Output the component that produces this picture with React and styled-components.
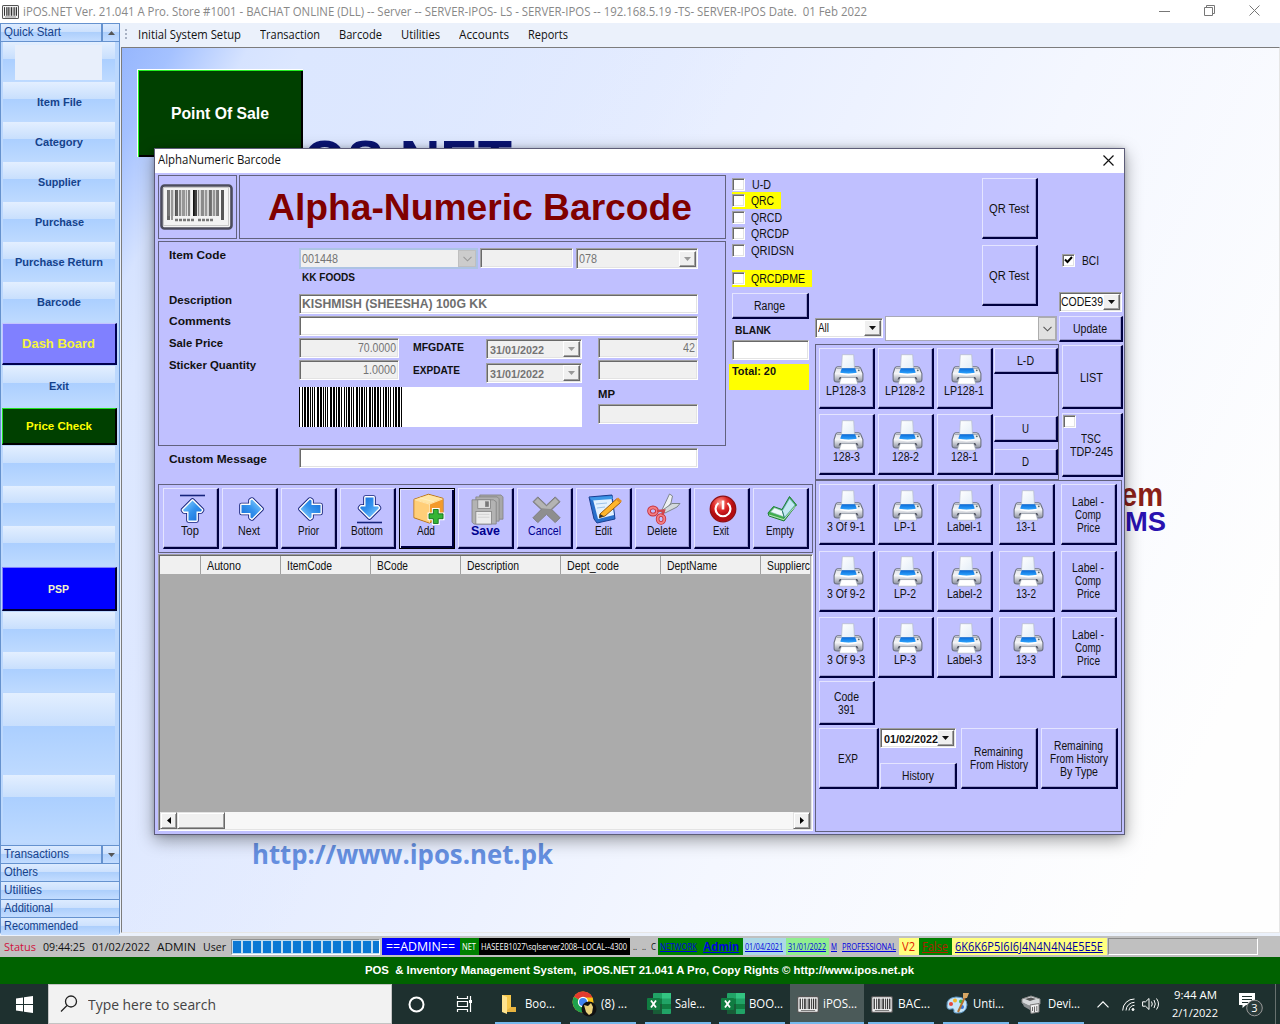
import React, { useLayoutEffect, useRef, useState } from 'react';
import styled, { createGlobalStyle, css } from 'styled-components';

const sans = '"Liberation Sans", Arial, sans-serif';
const ui = '"Open Sans", "Noto Sans", sans-serif';

const Global = createGlobalStyle`
  *{box-sizing:border-box}
  body{margin:0;background:#fff;overflow:hidden;font-family:${sans}}
  svg{display:block;flex:none}
`;

const TextBox = styled.span`
  display:block;flex:none;width:${p => p.$w}px;white-space:nowrap;
  font-family:${p => (p.$ui ? ui : sans)};
  font-size:${p => p.$s || 12}px;font-weight:${p => p.$b || 400};
  line-height:${p => p.$lh || 14}px;height:${p => p.$lh || 14}px;
  color:${p => p.$c || 'inherit'};
  margin:${p => p.$m || '0'};
`;
const Glyphs = styled.span`display:inline-block;transform-origin:0 50%;text-decoration:${p => (p.$u ? 'underline' : 'none')};`;
function T({ w, s, b, lh, c, m, u, seg, children }) {
  const ref = useRef(null);
  const [k, setK] = useState(1);
  useLayoutEffect(() => {
    if (ref.current && ref.current.offsetWidth) {
      const r = ref.current.getBoundingClientRect().width / k;
      setK(w / r);
    }
  }, [w, children]);
  return (
    <TextBox $w={w} $s={s} $b={b} $lh={lh} $c={c} $m={m} $ui={seg}>
      <Glyphs ref={ref} $u={u} style={{ transform: `scaleX(${k})` }}>{children}</Glyphs>
    </TextBox>
  );
}

const Screen = styled.div`width:1280px;height:1024px;display:flex;flex-direction:column;overflow:hidden;background:#fff;position:relative;`;

/* ---------- title bar ---------- */
const TitleBar = styled.header`height:23px;display:flex;align-items:center;background:#fff;padding-left:2px;flex:none;`;
const WinControls = styled.div`margin-left:auto;display:flex;align-items:center;gap:34px;padding:0 20px 2px 0;height:22px;`;

const BarcodeGlyph = ({ w = 17, h = 14 }) => (
  <svg width={w} height={h} viewBox="0 0 34 26" preserveAspectRatio="none">
    <rect x="1" y="1" width="32" height="24" rx="2" fill="#f4f4f4" stroke="#555" strokeWidth="2" />
    {[[4, 2], [8, 1.5], [11, 2.5], [15, 1], [17.5, 2.5], [21.5, 1.5], [24.5, 2], [28, 2]].map(([x, bw]) => (
      <rect key={x} x={x} y="4" width={bw} height="16" fill="#333" />
    ))}
    <rect x="6" y="21.5" width="22" height="1.5" fill="#777" />
  </svg>
);

/* ---------- body frame ---------- */
const Frame = styled.div`height:913px;display:flex;flex:none;background:#ebf1fb;`;
const Side = styled.aside`width:120px;height:911px;display:flex;flex-direction:column;border:1px solid #6592cf;border-top:0;background:#bcd8fd;flex:none;border-radius:0 0 2px 2px;`;
const Bar = styled.div`
  height:18px;flex:none;display:flex;align-items:center;padding:0 0 2px 3px;
  border-top:1px solid #6592cf;
  background:linear-gradient(#dcebff 0,#cde1fd 45%,#adcffc 50%,#c3dcff 100%);
`;
const BarArrow = styled.div`margin:0 0 -2px auto;width:17px;height:17px;border-left:1px solid #6592cf;display:flex;align-items:center;justify-content:center;box-shadow:-1px 0 #6592cf;`;
const SideStack = styled.div`height:804px;flex:none;display:flex;flex-direction:column;border-top:1px solid #6592cf;padding:0 4px 0 2px;`;
const GlassItem = styled.div`
  height:${p => p.$h || 40}px;flex:none;display:flex;align-items:center;justify-content:center;color:#15428b;
  background:linear-gradient(#e3efff 0,#c8dffd ${p => p.$split || 17}px,#abcfff ${p => p.$split || 17}px,#bedaff 100%);
  margin-top:${p => p.$mt || 0}px;
`;
const LogoBlank = styled.div`width:87px;height:35px;background:#e8effb;margin-right:1px;`;
const BigItem = styled.div`
  height:${p => p.$h}px;margin:${p => p.$mt || 0}px -2px 0 -1px;flex:none;display:flex;align-items:center;justify-content:center;
  background:${p => p.$bg};border:1px solid ${p => p.$lt};border-right:2px solid ${p => p.$dk};border-bottom:2px solid ${p => p.$dk};
`;

const Work = styled.div`width:1160px;display:flex;flex-direction:column;`;
const Menu = styled.nav`height:24px;display:flex;align-items:center;padding-left:5px;gap:19px;color:#111;`;
const Grip = styled.div`width:2px;height:12px;margin-right:-8px;background:repeating-linear-gradient(#a9b2c4 0 2px,transparent 2px 4px);`;
const Desk = styled.main`
  height:886px;margin-left:1px;border-left:1px solid #7c7c7c;border-top:1px solid #7c7c7c;border-right:1px solid #e6e6e6;border-bottom:1px solid #e6e6e6;
  position:relative;overflow:hidden;padding:20px 0 0 15px;
  background:linear-gradient(118deg,#96b6fd 0,#a4c1ff 45px,#d6e3ff 112px,#dce7ff 160px,rgba(222,232,255,0) 560px),
    linear-gradient(115deg,#dbe6ff 0,#e6edff 35%,#f4f7ff 62%,#fefefe 90%);
`;
const PosButton = styled.button`
  width:166px;height:88px;padding:0;display:flex;align-items:center;justify-content:center;background:#004000;
  border:1px solid #fff;border-width:1px 0 0 1px;box-shadow:inset 1px 1px #22ee22,inset -2px -2px #000;font:inherit;
`;
const Wall = styled.div`position:absolute;left:${p => p.$x}px;top:${p => p.$y}px;`;

/* ---------- dialog ---------- */
const Dialog = styled.section`
  position:absolute;left:154px;top:148px;width:971px;height:687px;border:1px solid #5d5d78;background:#c0c0ff;
  box-shadow:0 5px 16px rgba(0,0,0,.38),0 0 5px rgba(0,0,0,.2);
`;
const DialogTitle = styled.div`height:24px;background:#fff;display:flex;align-items:center;justify-content:space-between;padding:0 10px 2px 3px;`;
const DialogBody = styled.div`display:flex;height:661px;color:#111;`;
const LeftCol = styled.div`width:660px;display:flex;flex-direction:column;padding-left:3px;flex:none;`;
const RightCol = styled.div`width:309px;display:flex;flex-direction:column;flex:none;`;
const UpperRow = styled.div`height:311px;display:flex;flex:none;`;
const FormCol = styled.div`width:571px;padding-top:2px;flex:none;`;
const Outline = css`border:1px solid #62627e;`;
const HeadRow = styled.div`display:flex;gap:2px;height:64px;`;
const LogoCell = styled.div`${Outline}width:79px;display:flex;align-items:center;justify-content:center;padding-right:2px;`;
const HeadCell = styled.div`${Outline}width:487px;display:flex;align-items:center;padding:2px 0 0 28px;`;
const FormGroup = styled.div`${Outline}width:568px;height:205px;margin-top:2px;display:flex;padding-left:10px;`;
const LabelCol = styled.div`width:130px;flex:none;padding-top:6px;`;
const FieldCol = styled.div`flex:1;padding-top:6px;`;
const CodeRow = styled.div`display:flex;`;
const sunken = css`border:1px solid;border-color:#a0a0a0 #fff #fff #a0a0a0;box-shadow:inset 1px 1px #696969,inset -1px -1px #e3e3e3;`;
const Field = styled.div`
  ${sunken}width:${p => p.$w}px;height:${p => p.$h || 20}px;background:${p => (p.$on ? '#fff' : '#f0f0f0')};flex:none;
  display:flex;align-items:center;justify-content:${p => (p.$right ? 'flex-end' : 'flex-start')};padding:0 2px;
  color:#747474;margin-top:${p => p.$mt || 0}px;overflow:hidden;
`;
const SpacedField = styled(Field)`margin:0 3px 0 2px;`;
const Combo = styled(Field)`padding:0 1px 0 2px;justify-content:space-between;color:${p => (p.$on ? '#111' : '#747474')};`;
const DropBtn = styled.div`
  width:17px;height:16px;background:#f0f0f0;border:1px solid;border-color:#fff #696969 #696969 #fff;box-shadow:inset -1px -1px #a0a0a0;
  display:flex;align-items:center;justify-content:center;flex:none;margin-left:-3px;
`;
const FlatCombo = styled.div`
  width:${p => p.$w}px;height:${p => p.$h}px;border:${p => (p.$blue ? '2px solid #adc3e4' : '1px solid #a9a9b8')};background:${p => (p.$blue ? '#f0f0f0' : '#fff')};
  display:flex;align-items:center;justify-content:space-between;color:#747474;padding-left:1px;flex:none;
`;
const FlatDrop = styled.div`width:18px;height:100%;background:${p => (p.$live ? '#e1e1e1' : '#ccc')};border:1px solid ${p => (p.$live ? '#adadad' : '#bfbfbf')};display:flex;align-items:center;justify-content:center;`;
const Lower = styled.div`display:flex;margin-top:2px;`;
const LowerLeft = styled.div`width:299px;`;
const LowerGrid = styled.div`display:flex;height:49px;`;
const NumCol = styled.div`width:114px;display:flex;flex-direction:column;gap:2px;`;
const MiniCol = styled.div`width:73px;padding-top:2px;`;
const DateCol = styled.div`display:flex;flex-direction:column;gap:3px;padding-top:1px;`;
const PriceCol = styled.div`width:100px;`;
const CodeStrip = styled.div`width:283px;height:40px;background:#fff;`;
const MessageRow = styled.div`display:flex;align-items:center;padding-left:11px;margin-top:2px;`;

const ChecksCol = styled.div`width:84px;padding:5px 0 0 3px;flex:none;`;
const CheckRow = styled.div`display:flex;align-items:center;height:17px;width:${p => p.$w || 70}px;margin-top:${p => p.$mt || 0}px;background:${p => (p.$hot ? '#ffff00' : 'transparent')};padding-bottom:${p => (p.$hot ? 1 : 0)}px;`;
const Check = styled.div`${sunken}width:13px;height:13px;background:#fff;flex:none;display:flex;align-items:center;justify-content:center;`;
const Total = styled.div`width:80px;height:26px;background:#ff0;margin:4px 0 0 -3px;padding-left:3px;`;

const Btn = styled.button`
  font:inherit;color:#111;padding:${p => (p.$h && p.$h < 40 ? 0 : 2)}px 1px 0 0;flex:none;background:#c0c0ff;
  width:${p => p.$w || 56}px;height:${p => p.$h || 61}px;margin:${p => p.$m || '0'};
  border-style:solid;border-width:1px 2px 2px 1px;border-color:#e4e4ff #000040 #000040 #e4e4ff;
  box-shadow:inset -1px -1px #9a9ad2;
  display:flex;flex-direction:column;align-items:center;justify-content:${p => (p.$icon ? 'flex-start' : 'center')};
  ${p => p.$icon && css`padding-top:5px;`}
  ${p => p.$focus && css`border:1px solid #000;box-shadow:inset 1px 1px #e4e4ff,inset -2px -2px #000040;padding:5px 2px 0 0;`}
`;
const IconSlot = styled.div`height:30px;display:flex;align-items:center;justify-content:center;padding-left:4px;`;

const Toolbar = styled.div`${Outline}width:655px;height:69px;display:flex;gap:3px;padding:3px 0 0 4px;flex:none;`;
const Table = styled.div`${sunken}width:655px;height:277px;margin-top:1px;padding:1px 2px 1px 1px;background:#ababab;display:flex;flex-direction:column;overflow:hidden;flex:none;`;
const THead = styled.div`display:flex;height:18px;background:#f0f0f0;flex:none;overflow:hidden;`;
const Th = styled.div`width:${p => p.$w}px;flex:none;display:flex;align-items:center;padding:2px 0 0 6px;border-right:${p => (p.$last ? 0 : 1)}px solid #a0a0a0;`;
const TBody = styled.div`flex:1;background:#ababab;`;
const Scroll = styled.div`height:17px;display:flex;flex:none;background:#f7f7f7;`;
const ScrollBtn = styled.div`width:${p => p.$w}px;height:17px;margin-left:${p => (p.$end ? 'auto' : 0)};background:#f0f0f0;border:1px solid;border-color:#e3e3e3 #696969 #696969 #e3e3e3;box-shadow:inset 1px 1px #fff,inset -1px -1px #a0a0a0;display:flex;align-items:center;justify-content:center;`;

const TopArea = styled.div`height:143px;display:flex;flex:none;`;
const QrCol = styled.div`margin:5px 0 0 167px;display:flex;flex-direction:column;gap:6px;`;
const BciCol = styled.div`margin:80px 0 0 21px;`;
const BciRow = styled.div`display:flex;align-items:center;gap:7px;padding-left:3px;height:14px;margin-bottom:25px;`;
const FilterRow = styled.div`height:28px;display:flex;gap:2px;flex:none;`;
const GroupRow = styled.div`height:136px;display:flex;flex:none;`;
const GroupA = styled.div`${Outline}width:244px;height:136px;display:flex;padding:3px 0 0 3px;`;
const PrinterGrid = styled.div`display:grid;grid-template-columns:repeat(3,56px);grid-auto-rows:61px;gap:5px 3px;`;
const Narrow = styled.div`margin-left:1px;`;
const ListCol = styled.div`margin:1px 0 0 3px;display:flex;flex-direction:column;gap:4px;`;
const TscBtn = styled(Btn)`justify-content:flex-start;align-items:flex-start;padding-top:1px;`;
const GroupB = styled.div`${Outline}width:307px;height:352px;padding:3px 0 0 3px;flex:none;`;
const WideGrid = styled.div`display:grid;grid-template-columns:56px 56px 56px 56px 56px;grid-template-rows:61px 61px 61px;column-gap:3px;row-gap:5.5px;
  & > :nth-child(5n+4){margin-left:3px}
  & > :nth-child(5n+5){margin-left:6px}
`;
const BottomRow = styled.div`display:flex;margin-top:3px;`;
const HistoryCol = styled.div`width:77px;margin-left:1px;display:flex;flex-direction:column;justify-content:space-between;`;

/* ---------- status / taskbar ---------- */
const Status = styled.div`height:21px;background:#c0c0c0;display:flex;align-items:center;flex:none;color:#111;padding-left:4px;`;
const Cell = styled.div`height:17px;width:${p => p.$w}px;flex:none;background:${p => p.$bg || 'transparent'};display:flex;align-items:center;padding-left:${p => p.$pl || 0}px;`;
const Progress = styled.div`width:149px;height:16px;flex:none;margin:0 2px 0 5px;border:1px solid;border-color:#909090 #fff #fff #909090;padding:1px 1px 1px 1px;
  background:#c0dcf0;display:grid;grid-template-columns:repeat(15,8px);column-gap:2px;overflow:hidden;`;
const Block = styled.i`background:#0a78d4;`;
const EmptyBox = styled.div`width:150px;height:17px;margin-left:1px;border:1px solid;border-color:#8c8c8c #fff #fff #8c8c8c;`;
const Copy = styled.div`height:27px;background:#006200;display:flex;align-items:center;padding:0 0 2px 365px;flex:none;`;
const Taskbar = styled.footer`height:40px;background:#1e302f;display:flex;flex:none;color:#fff;`;
const StartCell = styled.div`width:48px;display:flex;align-items:center;justify-content:center;`;
const Search = styled.div`width:344px;height:40px;background:#f2f2f2;border:1px solid #c4c4c4;display:flex;align-items:center;padding-left:11px;gap:10px;`;
const SysIcon = styled.div`width:48px;display:flex;align-items:center;justify-content:center;`;
const TaskItem = styled.div`
  width:${p => p.$w || 66}px;margin-left:${p => p.$ml}px;height:40px;display:flex;align-items:center;padding-left:${p => p.$pl || 2}px;gap:4px;flex:none;
  box-shadow:inset 0 -2px #76b9ed;background:${p => (p.$active ? '#4b5a59' : 'transparent')};
`;
const IconBox = styled.div`width:${p => p.$w}px;display:flex;justify-content:center;flex:none;`;
const Clock = styled.div`margin-left:12px;display:flex;flex-direction:column;gap:2px;justify-content:center;align-items:center;padding-bottom:1px;`;
const Tray = styled.div`display:flex;align-items:center;margin-left:${p => p.$ml}px;`;
const ShowDesk = styled.div`width:1px;height:40px;background:#67716f;margin-left:12px;`;

/* ---------- icons ---------- */
const Down = ({ c = '#111' }) => <svg width="7" height="4" viewBox="0 0 7 4"><path d="M0 0H7L3.5 4Z" fill={c} /></svg>;
const Chev = ({ c = '#555' }) => <svg width="9" height="6" viewBox="0 0 9 6"><path d="M.5.8 4.5 4.8 8.5.8" fill="none" stroke={c} strokeWidth="1.1" /></svg>;

const Printer = () => (
  <svg width="31" height="31" viewBox="0 0 31 31">
    <defs>
      <linearGradient id="pb" x1="0" y1="0" x2="0" y2="1"><stop offset="0" stopColor="#dfe1e7" /><stop offset=".45" stopColor="#f4f5f7" /><stop offset="1" stopColor="#8d92a0" /></linearGradient>
      <linearGradient id="pp" x1="0" y1="0" x2="1" y2="1"><stop offset="0" stopColor="#fff" /><stop offset="1" stopColor="#e3edf7" /></linearGradient>
      <linearGradient id="pt" x1="0" y1="0" x2="0" y2="1"><stop offset="0" stopColor="#0a6ad8" /><stop offset="1" stopColor="#2fa6ff" /></linearGradient>
    </defs>
    <path d="M4.500 12.800H25.500Q27.500 12.800 28 15L29.900 19.500V25.500Q29.900 28 27 28H4Q1.100 28 1.100 25.500V19.500L2.500 15Q3 12.800 4.500 12.800Z" fill="url(#pb)" stroke="#6d7280" strokeWidth="1.100" />
    <path d="M3.500 14.500H27.300" stroke="#a9adb9" />
    <path d="M9.300.700H20.700L21.500 14.500H8.500Z" fill="url(#pp)" stroke="#b4bcc9" strokeWidth=".700" />
    <path d="M8.800 14.200H22.200L23.800 18.800Q15.500 20.800 7.200 18.800Z" fill="url(#pt)" />
    <path d="M7.200 18.800Q15.500 20.800 23.800 18.800V20.300Q15.500 22.500 7.200 20.300Z" fill="#fff" />
    <path d="M6.800 23H24.200L25.500 25.500H5.500Z" fill="#4c515e" />
    <path d="M8.300 23.600H22.700L24.800 30.200H6.200Z" fill="#fff" stroke="#a5acb9" strokeWidth=".600" />
    <circle cx="25.800" cy="16.300" r=".900" fill="#566" />
  </svg>
);

const ArrowIcon = ({ r, line }) => (
  <svg width="29" height="30" viewBox="0 0 29 30">
    <defs><linearGradient id="ar" x1="0" y1="0" x2="1" y2="1"><stop offset="0" stopColor="#8fd6ff" /><stop offset=".5" stopColor="#3493ee" /><stop offset="1" stopColor="#126cd6" /></linearGradient></defs>
    {line !== undefined && <path d={`M2 ${line}H27`} stroke="#16237c" strokeWidth="1.6" />}
    <g transform={`rotate(${r} 14.5 15) translate(0 ${line !== undefined ? 1.5 : 0})`}>
      {[['#16237c', 4.6], ['#fff', 2.8]].map(([c, sw]) => (
        <path key={c} d="M14.5 5 24 14.5 23 16H18.500V25H10.500V16H6L5 14.500Z" fill={c} stroke={c} strokeWidth={sw} strokeLinejoin="round" />
      ))}
      <path d="M14.5 5 24 14.5 23 16H18.500V25H10.500V16H6L5 14.500Z" fill="url(#ar)" />
    </g>
  </svg>
);
const DownArrow = () => (
  <svg width="29" height="30" viewBox="0 0 29 30"><g transform="rotate(180 14.5 15)"><ArrowIcon r={0} line={1.5} /></g></svg>
);
const AddIcon = () => (
  <svg width="33" height="32" viewBox="0 0 34 32">
    <path d="M2 6 17 .8 32 5V23L18 30.500 2 25Z" fill="#f8b44c" stroke="#b87316" />
    <path d="M2.500 6.300 17 1.400 31.300 5.300 18 10.500Z" fill="#ffe5a4" />
    <path d="M2.500 7 18 11V30L2.500 24.600Z" fill="#ffce78" />
    <path d="M18 11 31.500 6V22.500L18 29.800Z" fill="#f39a2c" />
    <path d="M8 4.500 22.500 8.500M18 11V30M2.500 6.500 18 11 31.500 5.700" stroke="#fff1c7" strokeWidth=".8" fill="none" />
    <path d="M22 16.500H27V21H32V26H27V31H22V26H17.500V21H22Z" fill="#2baa2b" stroke="#fff" strokeWidth="3" />
    <path d="M22 16.500H27V21H32V26H27V31H22V26H17.500V21H22Z" fill="#35b535" stroke="#0d6b18" strokeWidth=".9" />
  </svg>
);
const SaveIcon = () => (
  <svg width="33" height="31" viewBox="0 0 34 32" fill="#b3b3b3" stroke="#808080" strokeWidth=".8">
    <path d="M9 1H31L33 3V26H9Z" fill="#a8a8a8" />
    <path d="M5 3H27L29 5V28H5Z" fill="#b0b0b0" />
    <path d="M1 6H23L26 8V31H3L1 29Z" />
    <rect x="7" y="6" width="13" height="9" fill="#dcdcdc" /><rect x="15" y="8" width="3" height="5" fill="#777" />
    <rect x="5" y="18" width="16" height="13" fill="#ececec" /><path d="M7 21H19M7 24H19" stroke="#ccc" />
  </svg>
);
const CancelIcon = () => (
  <svg width="31" height="31" viewBox="0 0 32 32">
    <path d="M7 3 16 11.500 25 3 30 8 21.500 16 30 24.500 25 29.500 16 21 7 29.500 2 24.500 10.500 16 2 8Z" fill="#8e8e8e" stroke="#7c7c7c" strokeLinejoin="round" />
    <path d="M7 4.500 16 13 25 4.500 28.500 8 20.500 15.500Q12 15 10.500 14.500L3.500 8Z" fill="#b4b4b4" />
  </svg>
);
const EditIcon = () => (
  <svg width="34" height="30" viewBox="0 0 34 30">
    <path d="M1 3 24 1 27 25 9 29 6 25Z" fill="#2a6fcc" stroke="#1a3f92" strokeLinejoin="round" />
    <path d="M5 5.500 23.500 4.500 26 21 10 25Z" fill="#e4f1ff" />
    <path d="M1.500 3.500 24 2 25 5 4 6.500Z" fill="#3e97e6" />
    <path d="M8 10 19 9M9 14 17 13" stroke="#9fc3ea" />
    <path d="M12 20 28.500 5 32.500 8.500 17 22 11.500 23.500Z" fill="#ffb52b" stroke="#9a5a0d" />
    <path d="M28 5.500 30 3.500 34 7 32 9Z" fill="#e2902a" /><path d="M12 20 16 22.300 11 24Z" fill="#333" />
  </svg>
);
const CutIcon = () => (
  <svg width="34" height="32" viewBox="0 0 34 32">
    <path d="M14 19 22.500 1 25.500 3 24 10 17 20Z" fill="#eef1f3" stroke="#7d858b" />
    <path d="M15 17.500 25 10.500 33 10.500 30 14 18 20Z" fill="#d3d9dd" stroke="#7d858b" />
    <ellipse cx="6" cy="18" rx="4" ry="3.600" fill="none" stroke="#c42e38" strokeWidth="3.600" />
    <ellipse cx="6" cy="18" rx="4" ry="3.600" fill="none" stroke="#f37f84" strokeWidth="2" />
    <ellipse cx="14" cy="26" rx="3.400" ry="4" fill="none" stroke="#c42e38" strokeWidth="3.600" />
    <ellipse cx="14" cy="26" rx="3.400" ry="4" fill="none" stroke="#f37f84" strokeWidth="2" />
    <path d="M10 18 17 17.500 15.500 22" fill="none" stroke="#d0444c" strokeWidth="2.400" />
  </svg>
);
const PowerIcon = () => (
  <svg width="28" height="28" viewBox="0 0 28 28">
    <defs><radialGradient id="pw" cx=".4" cy=".25"><stop offset="0" stopColor="#ff9d93" /><stop offset=".6" stopColor="#dd2727" /><stop offset="1" stopColor="#b30c10" /></radialGradient></defs>
    <circle cx="14" cy="14" r="12.800" fill="url(#pw)" stroke="#8c1014" strokeWidth="1.200" />
    <path d="M9.500 8A7.400 7.400 0 1 0 18.500 8" fill="none" stroke="#fff" strokeWidth="2.200" />
    <path d="M14 5.500V14.500" stroke="#fff" strokeWidth="2.600" />
  </svg>
);
const EmptyIcon = () => (
  <svg width="30" height="28" viewBox="0 0 30 28">
    <path d="M1 18 6.500 11.500 15 14.500 22.500 1.500 29.500 10 17 26 2 21Z" fill="#3fae4c" stroke="#1e7d38" strokeLinejoin="round" />
    <path d="M3.500 17 7.500 12.800 15.300 15.800 17.500 22Z" fill="#eef9fb" stroke="#7fb8b0" strokeWidth=".600" />
    <path d="M15.300 15.800 22.500 3.500 28 10 17.500 22.500Z" fill="#c4e8f4" stroke="#5c9fc0" strokeWidth=".600" />
    <path d="M15.300 15.800 17.500 23.500" stroke="#2e7d6a" />
    <path d="M2 20 16.800 24.600 28.500 11" stroke="#d8f0d8" strokeWidth=".800" fill="none" />
  </svg>
);
const BigCode = () => (
  <svg width="73" height="46" viewBox="0 0 73 46">
    <rect x="1.500" y="1.500" width="70" height="43" rx="3" fill="#f3f3f3" stroke="#4c4c5c" strokeWidth="2.600" />
    <rect x="3.500" y="3.500" width="65" height="38" fill="none" stroke="#c9c9c9" />
    {[[7, 3, 6], [11, 2, 9], [15, 3, 4], [19, 2, 8], [22, 3, 9], [26, 1, 9], [28, 2, 7], [33, 4, 1], [38, 1, 8], [41, 3, 8], [45, 2, 9], [49, 3, 6], [53, 2, 9], [56, 3, 7], [61, 3, 5]].map(([x, w, g]) => (
      <rect key={x} x={x} y="6" width={w} height={x < 12 || x > 58 ? 30 : 26} fill={`#${g}${g}${g}`} />
    ))}
    {[8, 12, 16, 20, 24, 28, 35, 39, 43, 47, 51, 55].map(x => <rect key={x} x={x - 0.500} y="6" width="3" height="26" fill="#999" opacity=".35" />)}
    <path d="M15 36H34M38 36H54" stroke="#777" strokeWidth="2.500" strokeDasharray="3 1" />
  </svg>
);

const CODE39 = { '*': 'nwnnwnwnn', 0: 'nnnwwnwnn', 1: 'wnnwnnnnw', 4: 'nnnwwnnnw', 8: 'wnnwnnwnn' };
function Code39({ value }) {
  const rects = [];
  let x = 0;
  for (const ch of `*${value}*`) {
    [...CODE39[ch]].forEach((e, i) => {
      const w = e === 'w' ? 2 : 1;
      if (i % 2 === 0) rects.push([x, w]);
      x += w;
    });
    x += 1;
  }
  return (
    <svg width={x} height="40" shapeRendering="crispEdges">
      {rects.map(([rx, w]) => <rect key={rx} x={rx} y="0" width={w} height="40" />)}
    </svg>
  );
}

const Excel = () => (
  <svg width="24" height="22" viewBox="0 0 24 22">
    <rect x="6" y="0" width="18" height="21" rx="1" fill="#21a366" /><rect x="15" y="0" width="9" height="5.500" fill="#33c481" />
    <rect x="6" y="5.500" width="9" height="5.500" fill="#107c41" /><rect x="15" y="11" width="9" height="5" fill="#107c41" /><rect x="6" y="11" width="9" height="10" fill="#185c37" />
    <rect x="0" y="5" width="13" height="12" rx="1" fill="#107c41" /><path d="M4 7.500 9 14.500M9 7.500 4 14.500" stroke="#fff" strokeWidth="1.800" />
  </svg>
);
const Chrome = () => (
  <svg width="25" height="26" viewBox="0 0 25 26">
    <circle cx="11" cy="11" r="10.500" fill="#fbc116" /><path d="M11 11 1.900 5.800A10.500 10.500 0 0 1 20.500 6.500H11Z" fill="#e33b2e" />
    <path d="M11 11 1.900 5.800A10.500 10.500 0 0 0 10 21.400L14 15Z" fill="#1ea04c" />
    <circle cx="11" cy="11" r="5.200" fill="#fff" /><circle cx="11" cy="11" r="4" fill="#3f83f0" />
    <circle cx="17" cy="18" r="7.500" fill="#111" /><path d="M12 14 16 15 19 12 21 16 20 22 17 24 14 21Z" fill="#e9d17a" />
  </svg>
);
const Folder = () => (
  <svg width="16" height="20" viewBox="0 0 16 20"><path d="M1 1H10V18H1Z" fill="#f7c84b" /><path d="M1 1 6 3V20L1 18Z" fill="#ffe38e" /><path d="M10 13H15V18H6V16Z" fill="#e8b440" /></svg>
);
const Paint = () => (
  <svg width="24" height="24" viewBox="0 0 24 24">
    <path d="M2 14Q1 6 11 5 22 5 22 13 21 22 11 21 8 21 9 18 9 16 6 17 2 18 2 14Z" fill="#c5e4f8" stroke="#5e98c4" />
    <circle cx="6" cy="12" r="2" fill="#e4463c" /><circle cx="10" cy="8.500" r="2" fill="#f1b52b" /><circle cx="16" cy="9.500" r="2" fill="#42b34f" /><circle cx="17" cy="15" r="2" fill="#3974d8" />
    <path d="M13 20 20 5" stroke="#b57330" strokeWidth="2" /><path d="M18 1 24 1 22 6H18Z" fill="#d7a763" />
  </svg>
);
const Device = () => (
  <svg width="22" height="20" viewBox="0 0 22 20">
    <path d="M1 5 10 2 19 5V10L10 13 1 9Z" fill="#d5d8da" stroke="#888" /><path d="M4 5 10 3.500 15 5 9 7Z" fill="#555" />
    <path d="M1 8 9 12V16L3 12.500Z" fill="#8a8f92" />
    <path d="M9 11 18 9.500V18L10 19.500Z" fill="#eee" stroke="#777" /><path d="M11.500 13V17M13.500 12.500V18M15.800 12V17" stroke="#666" />
  </svg>
);

const PrintBtn = ({ label, w, ...rest }) => (
  <Btn $icon {...rest}><IconSlot><Printer /></IconSlot><T w={w}>{label}</T></Btn>
);
const CheckItem = ({ label, w, box, mt, hot, dx = 6 }) => (
  <CheckRow $w={box} $mt={mt} $hot={hot}><Check /><T w={w} m={`1px 0 0 ${dx}px`}>{label}</T></CheckRow>
);
const DateField = ({ w, value, tw, on, mt }) => (
  <Combo $w={w} $on={on} $mt={mt}><T w={tw} s={11} b={700} m="1px 0 0 1px">{value}</T><DropBtn><Down c={on ? '#111' : '#999'} /></DropBtn></Combo>
);

const tools = [
  ['Top', 18, <ArrowIcon r={0} line={1.5} />], ['Next', 22, <ArrowIcon r={90} />], ['Prior', 21, <ArrowIcon r={-90} />],
  ['Bottom', 32, <DownArrow />],
  ['Add', 18, <AddIcon />], ['Save', 29, <SaveIcon />], ['Cancel', 33, <CancelIcon />], ['Edit', 17, <EditIcon />],
  ['Delete', 30, <CutIcon />], ['Exit', 16, <PowerIcon />], ['Empty', 28, <EmptyIcon />],
];
const columns = [['', 41, 0], ['Autono', 80, 34], ['ItemCode', 90, 45], ['BCode', 90, 31], ['Description', 100, 52], ['Dept_code', 100, 52], ['DeptName', 100, 50], ['Supplierc', 50, 43]];
const sideItems = [['Item File', 45], ['Category', 48], ['Supplier', 43], ['Purchase', 49], ['Purchase Return', 88], ['Barcode', 44]];
const menu = [['Initial System Setup', 103], ['Transaction', 60], ['Barcode', 43], ['Utilities', 39], ['Accounts', 50], ['Reports', 40]];

function Sidebar() {
  return (
    <Side>
      <Bar><T w={57} c="#15428b">Quick Start</T><BarArrow><svg width="7" height="4"><path d="M0 4H7L3.500 0Z" fill="#555" /></svg></BarArrow></Bar>
      <SideStack>
        <GlassItem><LogoBlank /></GlassItem>
        {sideItems.map(([t, w]) => <GlassItem key={t}><T w={w} s={11} b={700}>{t}</T></GlassItem>)}
        <BigItem $h={42} $mt={1} $bg="#8080ff" $lt="#c4c4ff" $dk="#000050"><T w={73} s={13} b={700} c="#f4f43c" m="0 1px 0 0">Dash Board</T></BigItem>
        <GlassItem $mt={1}><T w={20} s={11} b={700}>Exit</T></GlassItem>
        <BigItem $h={37} $mt={2} $bg="#004000" $lt="#22e022" $dk="#000"><T w={66} s={11} b={700} c="#ff0">Price Check</T></BigItem>
        <GlassItem $mt={1} /><GlassItem /><GlassItem />
        <BigItem $h={44} $mt={1} $bg="#0000ff" $lt="#8080ff" $dk="#000030"><T w={21} s={11} b={700} c="#f4f4c8" m="0 1px 0 0">PSP</T></BigItem>
        <GlassItem $mt={1} /><GlassItem /><GlassItem $h={82} $split={33} $mt={1} /><GlassItem $h={68} $split={22} />
      </SideStack>
      <Bar><T w={65} c="#15428b">Transactions</T><BarArrow><Down c="#555" /></BarArrow></Bar>
      <Bar><T w={34} c="#15428b">Others</T></Bar>
      <Bar><T w={38} c="#15428b">Utilities</T></Bar>
      <Bar><T w={49} c="#15428b">Additional</T></Bar>
      <Bar><T w={74} c="#15428b">Recommended</T></Bar>
    </Side>
  );
}

const L = ({ w, mt, children }) => <T w={w} s={11} b={700} m={`${mt}px 0 0 0`}>{children}</T>;

function Form() {
  return (
    <FormCol>
      <HeadRow>
        <LogoCell><BigCode /></LogoCell>
        <HeadCell><T w={424} s={36} b={700} lh={42} c="#800000">Alpha-Numeric Barcode</T></HeadCell>
      </HeadRow>
      <FormGroup>
        <LabelCol>
          <L w={57} mt={0}>Item Code</L><L w={63} mt={31}>Description</L><L w={62} mt={7}>Comments</L><L w={54} mt={8}>Sale Price</L><L w={87} mt={8}>Sticker Quantity</L>
        </LabelCol>
        <FieldCol>
          <CodeRow>
            <FlatCombo $w={179} $h={21} $blue><T w={36}>001448</T><FlatDrop><Chev c="#999" /></FlatDrop></FlatCombo>
            <SpacedField $w={93} />
            <Combo $w={122} $h={21}><T w={18}>078</T><DropBtn><Down c="#999" /></DropBtn></Combo>
          </CodeRow>
          <T w={53} s={11} b={700} m="1px 0 10px 3px">KK FOODS</T>
          <Field $on $w={399}><T w={185} s={12} b={700} c="#6e6e6e">KISHMISH (SHEESHA) 100G KK</T></Field>
          <Field $on $w={399} $mt={2} />
          <Lower>
            <LowerLeft>
              <LowerGrid>
                <NumCol><Field $w={100} $right><T w={38}>70.0000</T></Field><Field $w={100} $right><T w={33}>1.0000</T></Field></NumCol>
                <MiniCol><T w={51} s={11} b={700}>MFGDATE</T><T w={47} s={11} b={700} m="9px 0 0 0">EXPDATE</T></MiniCol>
                <DateCol><DateField w={96} tw={54} value="31/01/2022" /><DateField w={96} tw={54} value="31/01/2022" mt={1} /></DateCol>
              </LowerGrid>
              <CodeStrip><Code39 value="001448" /></CodeStrip>
            </LowerLeft>
            <PriceCol>
              <Field $w={100} $right><T w={12}>42</T></Field>
              <Field $w={100} $mt={2} />
              <T w={17} s={11} b={700} m="7px 0 3px 0">MP</T>
              <Field $w={100} />
            </PriceCol>
          </Lower>
        </FieldCol>
      </FormGroup>
      <MessageRow><T w={98} s={11} b={700} m="2px 32px 0 0">Custom Message</T><Field $on $w={399} /></MessageRow>
    </FormCol>
  );
}

function RightPanel() {
  return (
    <RightCol>
      <TopArea>
        <QrCol><Btn><T w={40} m="0 1px 0 0">QR Test</T></Btn><Btn><T w={40} m="0 1px 0 0">QR Test</T></Btn></QrCol>
        <BciCol>
          <BciRow><Check><svg width="9" height="8" viewBox="0 0 9 8"><path d="M1 3.500 3.500 6 8 1" fill="none" stroke="#000" strokeWidth="2" /></svg></Check><T w={17} m="2px 0 0 0">BCI</T></BciRow>
          <Combo $w={63} $on><T w={42} m="0 0 0 -1px">CODE39</T><DropBtn><Down /></DropBtn></Combo>
        </BciCol>
      </TopArea>
      <FilterRow>
        <Combo $w={68} $on $mt={2}><T w={11}>All</T><DropBtn><Down /></DropBtn></Combo>
        <FlatCombo $w={172} $h={25}><span /><FlatDrop $live><Chev /></FlatDrop></FlatCombo>
        <Btn $w={64} $h={26}><T w={34}>Update</T></Btn>
      </FilterRow>
      <GroupRow>
        <GroupA>
          <PrinterGrid>
            <PrintBtn label="LP128-3" w={40} /><PrintBtn label="LP128-2" w={40} /><PrintBtn label="LP128-1" w={40} />
            <PrintBtn label="128-3" w={27} /><PrintBtn label="128-2" w={27} /><PrintBtn label="128-1" w={27} />
          </PrinterGrid>
          <Narrow><Btn $w={64} $h={26}><T w={17}>L-D</T></Btn><Btn $w={64} $h={26} $m="42px 0 0 0"><T w={7}>U</T></Btn><Btn $w={64} $h={26} $m="7px 0 0 0"><T w={7}>D</T></Btn></Narrow>
        </GroupA>
        <ListCol>
          <Btn $w={61} $h={64}><T w={23}>LIST</T></Btn>
          <TscBtn $w={61} $h={64}><Check /><T w={20} lh={13} m="5px 0 0 18px">TSC</T><T w={43} lh={13} m="0 0 0 7px">TDP-245</T></TscBtn>
        </ListCol>
      </GroupRow>
      <GroupB>
        <WideGrid>
          {[1, 2, 3].flatMap(n => [
            <PrintBtn key={`a${n}`} label={`3 Of 9-${n}`} w={38} />,
            <PrintBtn key={`b${n}`} label={`LP-${n}`} w={22} />,
            <PrintBtn key={`c${n}`} label={`Label-${n}`} w={35} />,
            <PrintBtn key={`d${n}`} label={`13-${n}`} w={20} />,
            <Btn key={`e${n}`}><T w={32} lh={13}>Label -</T><T w={26} lh={13}>Comp</T><T w={23} lh={13}>Price</T></Btn>,
          ])}
        </WideGrid>
        <Btn $h={44} $m="3px 0 0 0"><T w={25} lh={13}>Code</T><T w={17} lh={13}>391</T></Btn>
        <BottomRow>
          <Btn $w={60}><T w={20}>EXP</T></Btn>
          <HistoryCol><DateField w={76} tw={54} value="01/02/2022" on /><Btn $w={77} $h={26}><T w={32}>History</T></Btn></HistoryCol>
          <Btn $w={77} $m="0 0 0 4px"><T w={49} lh={13}>Remaining</T><T w={58} lh={13}>From History</T></Btn>
          <Btn $w={77} $m="0 0 0 3px"><T w={49} lh={13}>Remaining</T><T w={58} lh={13}>From History</T><T w={38} lh={13}>By Type</T></Btn>
        </BottomRow>
      </GroupB>
    </RightCol>
  );
}

export default function App() {
  return (
    <Screen>
      <Global />
      <TitleBar>
        <BarcodeGlyph /><T seg w={844} s={12} c="#888" lh={16} m="0 0 0 4px">{'iPOS.NET Ver. 21.041 A Pro. Store #1001 - BACHAT ONLINE (DLL) -- Server -- SERVER-IPOS- LS - SERVER-IPOS -- 192.168.5.19 -TS- SERVER-IPOS Date.\u00a0 01 Feb 2022'}</T>
        <WinControls>
          <svg width="11" height="10"><path d="M0 5.500H11" stroke="#777" /></svg>
          <svg width="11" height="11" fill="none" stroke="#777"><path d="M.5 2.500H8.500V10.500H.5ZM2.500 2.500V.5H10.500V8.500H8.500" /></svg>
          <svg width="11" height="11"><path d="M.5.5 10.500 10.500M10.500.5.5 10.500" stroke="#777" /></svg>
        </WinControls>
      </TitleBar>
      <Frame>
        <Sidebar />
        <Work>
          <Menu><Grip />{menu.map(([t, w]) => <T key={t} seg s={12} lh={16} w={w}>{t}</T>)}</Menu>
          <Desk>
            <Wall $x={128} $y={81}><T w={262} s={57} b={700} lh={64} c="#0a1472">iPOS.NET</T></Wall>
            <Wall $x={999} $y={433}><T w={42} s={34} b={700} lh={26} c="#8a1f18">em</T></Wall>
            <Wall $x={1003} $y={463}><T w={41} s={27} b={700} lh={22} c="#2912b0">MS</T></Wall>
            <Wall $x={130} $y={788}><T w={301} s={26} b={700} seg lh={36} c="#658fe0">http://www.ipos.net.pk</T></Wall>
            <Wall $x={15} $y={21}><PosButton><T w={98} s={16} b={700} lh={18} c="#fff" m="0 1px 0 0">Point Of Sale</T></PosButton></Wall>
          </Desk>
        </Work>
      </Frame>
      <Status>
        <T seg w={32} s={11.5} c="#d0103c">Status</T>
        <T seg w={42} s={11.5} m="0 0 0 7px">09:44:25</T>
        <T seg w={58} s={11.5} m="0 0 0 7px">01/02/2022</T>
        <T seg w={39} s={11.5} m="0 0 0 7px">ADMIN</T>
        <T seg w={23} s={11.5} m="0 0 0 7px">User</T>
        <Progress>{Array.from({ length: 15 }, (_, i) => <Block key={i} />)}</Progress>
        <Cell $w={78} $bg="#0000ff" $pl={4}><T seg w={69} s={12} c="#fff">==ADMIN==</T></Cell>
        <Cell $w={19} $bg="#008000" $pl={2}><T seg w={14} s={8.5} c="#fff">NET</T></Cell>
        <Cell $w={151} $bg="#000" $pl={2}><T seg w={146} s={8.5} c="#fff">HASEEB1027\sqlserver2008--LOCAL--4300</T></Cell>
        <Cell $w={28} $pl={3}><T seg w={4} s={9}>..</T><T seg w={4} s={9} m="0 0 0 5px">..</T><T seg w={5} s={9} m="0 0 0 5px">C</T></Cell>
        <Cell $w={85} $bg="#008000" $pl={2}><T seg w={37} s={8.5} c="#0000e0" u>NETWORK</T><T w={36} s={12} b={700} c="#0000e0" u m="0 0 0 6px">Admin</T></Cell>
        <Cell $w={43} $bg="#add8e6" $pl={2}><T seg w={38} s={8.5} c="#0000e0" u>01/04/2021</T></Cell>
        <Cell $w={43} $bg="#90ee90" $pl={2}><T seg w={38} s={8.5} c="#0000e0" u>31/01/2022</T></Cell>
        <Cell $w={70} $pl={2}><T seg w={6} s={8.5} c="#0000e0" u>M</T><T seg w={54} s={8.500} c="#0000e0" u m="0 0 0 5px">PROFESSIONAL</T></Cell>
        <Cell $w={20} $bg="#ffff80" $pl={3}><T seg w={13} s={12} c="#e02000">V2</T></Cell>
        <Cell $w={33} $bg="#008000" $pl={3}><T seg w={26} s={12} c="#b02000" u>False</T></Cell>
        <Cell $w={155} $bg="#ffff80" $pl={3}><T seg w={148} s={12} c="#0000a0" u>6K6K6P5I6I6J4N4N4N4E5E5E</T></Cell>
        <EmptyBox />
      </Status>
      <Copy><T w={549} s={11.5} b={700} c="#fff">{'POS\u00a0 & Inventory Management System,\u00a0 iPOS.NET 21.041 A Pro, Copy Rights © http://www.ipos.net.pk'}</T></Copy>
      <Taskbar>
        <StartCell><svg width="17" height="17" viewBox="0 0 17 17" fill="#fff"><path d="M0 2.500 7 1.500V8H0ZM8 1.300 17 0V8H8ZM0 9H7V15.500L0 14.500ZM8 9H17V17L8 15.700Z" /></svg></StartCell>
        <Search>
          <svg width="18" height="18" viewBox="0 0 18 18"><circle cx="11" cy="6.500" r="5.500" fill="none" stroke="#222" strokeWidth="1.300" /><path d="M7 10.500 1 16.500" stroke="#222" strokeWidth="1.300" /></svg>
          <T seg w={128} s={15} lh={20} c="#444">Type here to search</T>
        </Search>
        <SysIcon><svg width="17" height="17"><circle cx="8.500" cy="8.500" r="7" fill="none" stroke="#fff" strokeWidth="2" /></svg></SysIcon>
        <SysIcon><svg width="17" height="16" fill="none" stroke="#fff"><path d="M1.500 0V2.500H11.500V0M1.500 16V13.500H11.500V16M1.500 5.500H11.500V10.500H1.500ZM14.500 0V16" strokeWidth="1.200" /><path d="M14.500 4V7" strokeWidth="3" /></svg></SysIcon>
        <TaskItem $ml={7}><IconBox $w={24}><Folder /></IconBox><T seg w={30} s={12} lh={16}>Boo...</T></TaskItem>
        <TaskItem $ml={9}><IconBox $w={25}><Chrome /></IconBox><T seg w={26} s={12} lh={16}>(8) ...</T></TaskItem>
        <TaskItem $ml={9}><IconBox $w={24}><Excel /></IconBox><T seg w={30} s={12} lh={16}>Sale...</T></TaskItem>
        <TaskItem $ml={8}><IconBox $w={24}><Excel /></IconBox><T seg w={34} s={12} lh={16}>BOO...</T></TaskItem>
        <TaskItem $ml={5} $w={74} $pl={6} $active><IconBox $w={23}><BarcodeGlyph w={22} h={17} /></IconBox><T seg w={34} s={12} lh={16}>iPOS...</T></TaskItem>
        <TaskItem $ml={4}><IconBox $w={24}><BarcodeGlyph w={22} h={17} /></IconBox><T seg w={32} s={12} lh={16}>BAC...</T></TaskItem>
        <TaskItem $ml={9}><IconBox $w={24}><Paint /></IconBox><T seg w={31} s={12} lh={16}>Unti...</T></TaskItem>
        <TaskItem $ml={9}><IconBox $w={24}><Device /></IconBox><T seg w={32} s={12} lh={16}>Devi...</T></TaskItem>
        <Tray $ml={13}><svg width="12" height="7" viewBox="0 0 12 7"><path d="M.5 6.300 6 .8 11.500 6.300" fill="none" stroke="#fff" strokeWidth="1.200" /></svg></Tray>
        <Tray $ml={13}><svg width="13" height="13" viewBox="0 0 13 13" fill="none" stroke="#fff"><path d="M.7 12.500A11.500 11.500 0 0 1 12.500 1M4 12.500A8.500 8.500 0 0 1 12.500 4.300M7 12.500A5.500 5.500 0 0 1 12.500 7.300" /><circle cx="11" cy="11.500" r="1" fill="#fff" /></svg></Tray>
        <Tray $ml={7}><svg width="18" height="14" viewBox="0 0 18 14" fill="none" stroke="#fff"><path d="M.6 4.800H3.500L7 1.500V12.500L3.500 9.200H.6ZM9.500 4.500Q11 7 9.500 9.500M12 3Q14.500 7 12 11M14.500 1.500Q18.500 7 14.500 12.500" /></svg></Tray>
        <Clock><T seg w={43} s={11.500} lh={16}>9:44 AM</T><T seg w={46} s={11.500} lh={16}>2/1/2022</T></Clock>
        <Tray $ml={21}>
          <svg width="24" height="26" viewBox="0 0 24 26"><path d="M0 2H16V14H7L3.500 17V14H0Z" fill="#fff" /><path d="M3 5.500H13M3 8.500H13M3 11.500H9" stroke="#1e302f" /><circle cx="15.500" cy="17" r="7.800" fill="#2b3b3a" stroke="#999" /><text x="15.500" y="21" fontSize="11" fontFamily="Open Sans, sans-serif" textAnchor="middle" fill="#fff">3</text></svg>
        </Tray>
        <ShowDesk />
      </Taskbar>

      <Dialog>
        <DialogTitle><T seg w={123} s={12} lh={16} c="#111">AlphaNumeric Barcode</T><svg width="11" height="11"><path d="M.5.500 10.500 10.500M10.500.500.5 10.500" stroke="#111" strokeWidth="1.200" /></svg></DialogTitle>
        <DialogBody>
          <LeftCol>
            <UpperRow>
              <Form />
              <ChecksCol>
                <CheckItem label="U-D" w={19} mt={-2} dx={7} />
                <CheckItem label="QRC" w={23} hot box={49} mt={-1} />
                <CheckItem label="QRCD" w={31} />
                <CheckItem label="QRCDP" w={38} mt={-1} />
                <CheckItem label="QRIDSN" w={43} />
                <CheckItem label="QRCDPME" w={54} hot box={80} mt={11} />
                <Btn $w={77} $h={26} $m="6px 0 4px 0"><T w={31}>Range</T></Btn>
                <T w={36} s={11} b={700} m="0 0 3px 3px">BLANK</T>
                <Field $on $w={77} />
                <Total><T w={44} s={11} b={700}>Total: 20</T></Total>
              </ChecksCol>
            </UpperRow>
            <Toolbar>
              {tools.map(([t, w, icon]) => (
                <Btn key={t} $icon $focus={t === 'Add'}>
                  <IconSlot>{icon}</IconSlot>
                  <T w={w} b={t === 'Save' ? 700 : 400} c={t === 'Save' || t === 'Cancel' ? '#000090' : '#111'}>{t}</T>
                </Btn>
              ))}
            </Toolbar>
            <Table>
              <THead>{columns.map(([t, w, tw], i) => <Th key={t} $w={w} $last={i === columns.length - 1}>{t && <T w={tw}>{t}</T>}</Th>)}</THead>
              <TBody />
              <Scroll>
                <ScrollBtn $w={17}><svg width="4" height="7"><path d="M4 0V7L0 3.500Z" /></svg></ScrollBtn>
                <ScrollBtn $w={48} />
                <ScrollBtn $w={17} $end><svg width="4" height="7"><path d="M0 0V7L4 3.500Z" /></svg></ScrollBtn>
              </Scroll>
            </Table>
          </LeftCol>
          <RightPanel />
        </DialogBody>
      </Dialog>
    </Screen>
  );
}
